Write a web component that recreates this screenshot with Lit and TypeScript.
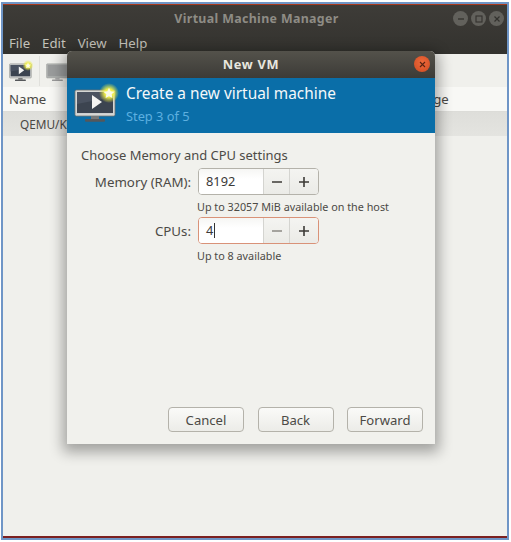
import { LitElement, html, css, svg } from "lit";
import { customElement } from "lit/decorators.js";

const monitor = (w: number, star: boolean, grey = false) => html`
  <svg width=${w} height=${w * 0.85} viewBox="0 0 46 39">
    <defs>
      <radialGradient id="glow"><stop offset="0.4" stop-color="#f2f04a"/><stop offset="1" stop-color="#e8e840" stop-opacity="0"/></radialGradient>
    </defs>
    <rect x="1" y="7" width="40" height="26" rx="1.5" fill=${grey ? "#b5b7b5" : "#d5d7d5"} stroke=${grey ? "#8d8f8d" : "#6f716f"} stroke-width=".8"/>
    <rect x="3" y="9" width="36" height="21" fill=${grey ? "#9a9c9c" : "#3c4450"}/>
    ${grey ? null : svg`<path d="M3 9h36v5L3 21z" fill="#4a5260"/>`}
    <rect x="17" y="33" width="8" height="3" fill=${grey ? "#a8a8a8" : "#77797a"}/>
    <rect x="11" y="36" width="20" height="2.6" rx="1" fill=${grey ? "#9a9a9a" : "#55575a"}/>
    ${star ? svg`
      <path d="M18 12 L28 19 L18 26Z" fill="#f4f4f2"/>
      <circle cx="35" cy="10" r="10" fill="url(#glow)"/>
      <path d="M35 4.6l1.7 3.5 3.8.5-2.8 2.6.7 3.8-3.4-1.8-3.4 1.8.7-3.8-2.8-2.6 3.8-.5z" fill="#fbfbe6"/>` : null}
  </svg>`;

@customElement("app-root")
export class AppRoot extends LitElement {
  static styles = css`
    :host {
      display: block;
      width: 511px;
      height: 542px;
      background: #fff;
      font-family: "Noto Sans", "Open Sans", sans-serif;
      box-sizing: border-box;
      padding: 2px 2px 2px 1px;
      position: relative;
      overflow: hidden;
    }
    .frame {
      height: 100%;
      box-sizing: border-box;
      border: 2px solid #6f95c6;
      display: flex;
    }
    .window {
      flex: 1;
      display: flex;
      flex-direction: column;
      background: #f0f0ec;
      border-top: 1px solid #a8381c;
      border-bottom: 2px solid #7c2020;
      min-width: 0;
    }
    .head {
      height: 49px;
      background: linear-gradient(#3e3c38, #33322e);
      display: flex;
      flex-direction: column;
      flex: none;
    }
    .titlebar {
      height: 27px;
      display: flex;
      align-items: center;
      position: relative;
    }
    .wtitle {
      flex: 1;
      text-align: center;
      font-size: 12.4px;
      font-weight: 700;
      color: #8e8c85;
      letter-spacing: 0.35px;
      padding-left: 3px;
    }
    .wctl {
      position: absolute;
      right: 3px;
      top: 6px;
      display: flex;
      gap: 3px;
    }
    .wctl i {
      width: 15px;
      height: 15px;
      border-radius: 50%;
      background: #62615c;
      display: flex;
      align-items: center;
      justify-content: center;
    }
    .menu {
      display: flex;
      gap: 12px;
      padding: 2px 0 0 6px;
      font-size: 13.2px;
      color: #c4c2ba;
      line-height: 18px;
    }
    .toolbar {
      height: 33px;
      flex: none;
      background: #f0f0ec;
      display: flex;
      align-items: center;
      padding-left: 6px;
      gap: 6px;
    }
    .sep { width: 1px; height: 30px; background: #e0e0dc; margin: 0 0 0 -1px; }
    .cols {
      height: 25px;
      flex: none;
      background: #f8f8f5;
      border-bottom: 1px solid #dcdcd8;
      box-sizing: border-box;
      display: flex;
      align-items: center;
      padding: 0 0 0 6px;
      font-size: 13.2px;
      color: #4a4844;
    }
    .cols .age { margin-left: 387px; }
    .row {
      height: 24px;
      flex: none;
      background: linear-gradient(#dededa, #e4e4e0);
      padding-left: 17px;
      font-size: 11.8px;
      line-height: 25px;
      color: #4a4844;
    }
    .dialog {
      position: absolute;
      left: 67px;
      top: 51px;
      width: 368px;
      height: 393px;
      display: flex;
      flex-direction: column;
      background: #f1f1ed;
      border-radius: 5px 5px 0 0;
      box-shadow: 0 4px 14px 4px rgba(0, 0, 0, 0.33);
    }
    .dtitle {
      height: 27px;
      box-sizing: border-box;
      padding-bottom: 2px;
      flex: none;
      border-radius: 5px 5px 0 0;
      background: linear-gradient(#54524b, #3c3b37);
      color: #e8e6df;
      font-size: 12.8px;
      font-weight: 700;
      letter-spacing: 0.7px;
      display: flex;
      align-items: center;
      justify-content: center;
      position: relative;
    }
    .close {
      position: absolute;
      right: 5px;
      top: 5px;
      width: 16px;
      height: 16px;
      border-radius: 50%;
      background: radial-gradient(circle at 50% 40%, #ee6a3c, #d04a20);
      display: flex;
      align-items: center;
      justify-content: center;
    }
    .banner {
      height: 55px;
      flex: none;
      background: #0a6ea8;
      display: flex;
      gap: 6px;
      padding-left: 7px;
      box-sizing: border-box;
    }
    .banner svg { margin-top: 5px; }
    .btxt { padding-top: 6px; }
    .b1 { font-size: 15.4px; line-height: 20px; color: #f4f8fa; }
    .b2 { font-size: 12.8px; line-height: 16px; margin-top: 4px; color: #5db0e0; }
    .body {
      flex: 1;
      display: flex;
      flex-direction: column;
      padding: 14px 12px 12px 14px;
      color: #4c4a46;
      min-height: 0;
    }
    .lead { font-size: 12.95px; line-height: 17px; }
    .form {
      display: grid;
      grid-template-columns: 110px auto;
      column-gap: 7px;
      margin-top: 4px;
      justify-content: start;
      align-items: center;
    }
    .lbl { text-align: right; font-size: 13.3px; }
    .hint { grid-column: 2; font-size: 10.8px; line-height: 14px; padding-top: 5px; height: 22px; margin-left: -1px; box-sizing: border-box; }
    .form .hint.h2 { height: auto; }
    .spin {
      width: 121px;
      height: 27px;
      box-sizing: border-box;
      border: 1px solid #b4b2aa;
      border-radius: 4px;
      background: #fff;
      display: flex;
      overflow: hidden;
      font-size: 12.8px;
    }
    .spin.focus { border-color: #d99278; }
    .val { flex: 1; padding-left: 7px; line-height: 25px; background: linear-gradient(#f6f6f4, #fff 40%); color: #3c3a38; display: flex; align-items: center; }
    .caret { width: 1px; height: 15px; background: #333; margin-left: 1px; }
    .sb {
      width: 26px;
      box-sizing: border-box;
      border-left: 1px solid #d4d4d0;
      background: linear-gradient(#f4f4f1, #ebebe7);
      display: flex;
      align-items: center;
      justify-content: center;
    }
    .sb:last-child { width: 29px; }
    .actions {
      margin-top: auto;
      display: flex;
      justify-content: flex-end;
      gap: 13.5px;
    }
    .btn {
      width: 76px;
      height: 25px;
      box-sizing: border-box;
      border: 1px solid #b4b2aa;
      border-radius: 4px;
      background: linear-gradient(#fafaf8, #ecece8);
      display: flex;
      align-items: center;
      justify-content: center;
      font-size: 13.1px;
      color: #4c4a46;
    }
  `;

  private sign(kind: "-" | "+", dim = false) {
    const c = dim ? "#8c8a84" : "#3c3a36";
    return html`<svg width="10" height="10" viewBox="0 0 10 10">
      <path d=${kind === "-" ? "M0 5h10" : "M0 5h10M5 0v10"} stroke=${c} stroke-width="1.6"/>
    </svg>`;
  }

  render() {
    return html`
      <div class="frame">
        <div class="window">
          <div class="head">
            <div class="titlebar">
              <div class="wtitle">Virtual Machine Manager</div>
              <div class="wctl">
                <i><svg width="8" height="8" viewBox="0 0 8 8"><path d="M1 4h6" stroke="#33322e" stroke-width="1.3"/></svg></i>
                <i><svg width="8" height="8" viewBox="0 0 8 8"><rect x="1" y="1" width="6" height="6" fill="none" stroke="#33322e" stroke-width="1.1"/></svg></i>
                <i><svg width="8" height="8" viewBox="0 0 8 8"><path d="M1.5 1.5l5 5M6.5 1.5l-5 5" stroke="#33322e" stroke-width="1.2"/></svg></i>
              </div>
            </div>
            <div class="menu"><span>File</span><span>Edit</span><span>View</span><span>Help</span></div>
          </div>
          <div class="toolbar">
            ${monitor(25, true)}
            <div class="sep"></div>
            ${monitor(25, false, true)}
          </div>
          <div class="cols"><span>Name</span><span class="age">ge</span></div>
          <div class="row">QEMU/KVM</div>
        </div>
      </div>
      <div class="dialog">
        <div class="dtitle">New VM
          <div class="close"><svg width="7" height="7" viewBox="0 0 7 7"><path d="M1 1l5 5M6 1l-5 5" stroke="#5a2412" stroke-width="1.1"/></svg></div>
        </div>
        <div class="banner">
          ${monitor(46, true)}
          <div class="btxt">
            <div class="b1">Create a new virtual machine</div>
            <div class="b2">Step 3 of 5</div>
          </div>
        </div>
        <div class="body">
          <div class="lead">Choose Memory and CPU settings</div>
          <div class="form">
            <div class="lbl">Memory (RAM):</div>
            <div class="spin"><div class="val">8192</div><div class="sb">${this.sign("-")}</div><div class="sb">${this.sign("+")}</div></div>
            <div class="hint">Up to 32057 MiB available on the host</div>
            <div class="lbl">CPUs:</div>
            <div class="spin focus"><div class="val">4<span class="caret"></span></div><div class="sb">${this.sign("-", true)}</div><div class="sb">${this.sign("+")}</div></div>
            <div class="hint h2">Up to 8 available</div>
          </div>
          <div class="actions">
            <div class="btn">Cancel</div>
            <div class="btn">Back</div>
            <div class="btn">Forward</div>
          </div>
        </div>
      </div>
    `;
  }
}
